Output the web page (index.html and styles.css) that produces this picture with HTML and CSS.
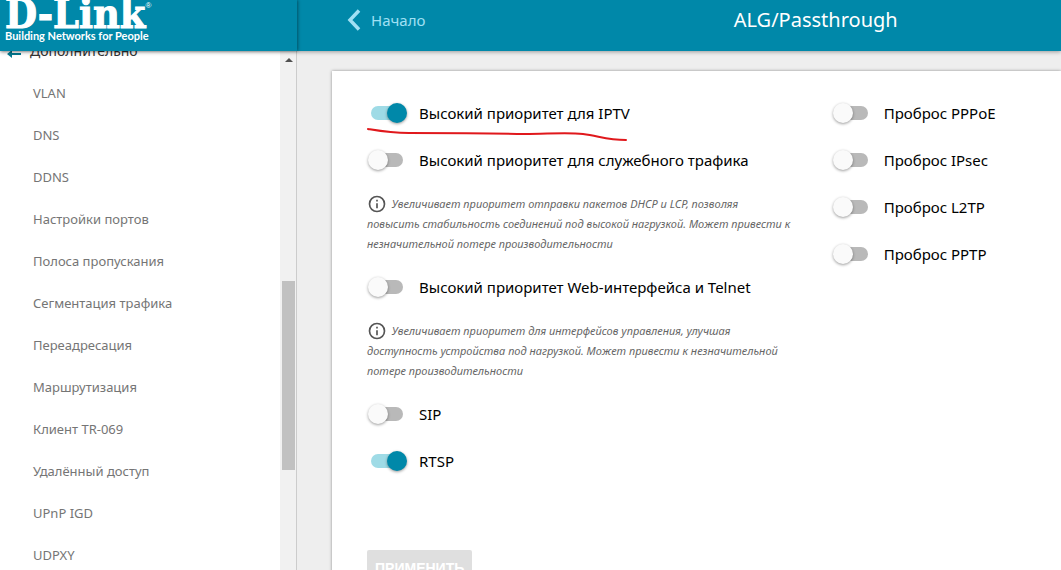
FILE: index.html
```html
<!DOCTYPE html>
<html lang="ru">
<head>
  <meta charset="UTF-8">
  <title>ALG/Passthrough</title>
  <link rel="stylesheet" href="styles.css">
</head>
<body>

  <header class="header">
    <a class="logo" href="#">
      <span class="logo-name">D-Link<sup>®</sup></span>
      <span class="logo-slogan">Building Networks for People</span>
    </a>
    <div class="header-main">
      <a class="back" href="#">
        <svg width="14" height="22" viewBox="0 0 14 22"><path d="M12 1.500L3 11l9 9.500" fill="none" stroke="currentColor" stroke-width="3.500"/></svg>
        Начало
      </a>
      <h1>ALG/Passthrough</h1>
    </div>
  </header>

  <div class="page">
    <aside class="sidebar">
      <nav class="menu">
        <a class="menu-title" href="#">
          <svg width="14" height="10" viewBox="0 0 14 10"><path d="M0 5l5-4v3h9v2H5v3z" fill="#00788f"/></svg>
          Дополнительно
        </a>
        <a href="#">VLAN</a>
        <a href="#">DNS</a>
        <a href="#">DDNS</a>
        <a href="#">Настройки портов</a>
        <a href="#">Полоса пропускания</a>
        <a href="#">Сегментация трафика</a>
        <a href="#">Переадресация</a>
        <a href="#">Маршрутизация</a>
        <a href="#">Клиент TR-069</a>
        <a href="#">Удалённый доступ</a>
        <a href="#">UPnP IGD</a>
        <a href="#">UDPXY</a>
      </nav>
      <div class="scrollbar">
        <div class="scroll-arrow"></div>
        <div class="scroll-thumb"></div>
      </div>
    </aside>

    <main class="content">
      <form class="card">
        <div class="columns">
          <div>
            <label class="option marked">
              <input type="checkbox" checked> Высокий приоритет для IPTV
              <svg class="underline" width="264" height="16" viewBox="0 0 264 16"><path d="M1 2C13 4 24 6 42 6C80 6 120 6 158 7C180 7 200 5 216 7C232 9 240 13 259 13" fill="none" stroke="#e0181c" stroke-width="2" stroke-linecap="round"/></svg>
            </label>
            <label class="option"><input type="checkbox"> Высокий приоритет для служебного трафика</label>
            <p class="hint">
              <svg width="20" height="20" viewBox="0 0 24 24"><circle cx="12" cy="12" r="9" fill="none" stroke="#555" stroke-width="2"/><path d="M11 7h2v2h-2zM11 11h2v6h-2z" fill="#555"/></svg>
              Увеличивает приоритет отправки пакетов DHCP и LCP, позволяя<br>
              повысить стабильность соединений под высокой нагрузкой. Может привести к<br>
              незначительной потере производительности
            </p>
            <label class="option"><input type="checkbox"> Высокий приоритет Web-интерфейса и Telnet</label>
            <p class="hint">
              <svg width="20" height="20" viewBox="0 0 24 24"><circle cx="12" cy="12" r="9" fill="none" stroke="#555" stroke-width="2"/><path d="M11 7h2v2h-2zM11 11h2v6h-2z" fill="#555"/></svg>
              Увеличивает приоритет для интерфейсов управления, улучшая<br>
              доступность устройства под нагрузкой. Может привести к незначительной<br>
              потере производительности
            </p>
            <label class="option"><input type="checkbox"> SIP</label>
            <label class="option"><input type="checkbox" checked> RTSP</label>
          </div>
          <div>
            <label class="option"><input type="checkbox"> Проброс PPPoE</label>
            <label class="option"><input type="checkbox"> Проброс IPsec</label>
            <label class="option"><input type="checkbox"> Проброс L2TP</label>
            <label class="option"><input type="checkbox"> Проброс PPTP</label>
          </div>
        </div>
        <button class="apply" type="button" disabled>ПРИМЕНИТЬ</button>
      </form>
    </main>
  </div>

</body>
</html>
```

FILE: styles.css
```css
* {
  box-sizing: border-box;
}

body {
  margin: 0;
  height: 100vh;
  display: flex;
  flex-direction: column;
  overflow: hidden;
  background: #eee;
  font-family: Tahoma, "Noto Sans", sans-serif;
}

a {
  color: inherit;
  text-decoration: none;
}

.header {
  display: flex;
  flex-shrink: 0;
  height: 51px;
  position: relative;
  z-index: 1;
  background: #0088a9;
  color: white;
  box-shadow: 0 1px 4px rgba(0,0,0,0.35);
}

.logo {
  display: flex;
  flex-direction: column;
  justify-content: flex-end;
  width: 297px;
  flex-shrink: 0;
  padding: 0 0 8px 5px;
  overflow: hidden;
  white-space: nowrap;
  box-shadow: 1px 0 3px rgba(0,0,0,0.4);
}

.logo-name {
  font-family: "DejaVu Serif Condensed", "DejaVu Serif", serif;
  font-weight: bold;
  font-size: 41px;
  line-height: 30px;
  -webkit-text-stroke: 1px white;
}

.logo-name sup {
  font-family: "Liberation Sans", sans-serif;
  font-weight: normal;
  font-size: 8px;
  line-height: 8px;
  vertical-align: 20px;
  -webkit-text-stroke: 0;
}

.logo-slogan {
  font-family: Lato, sans-serif;
  font-weight: bold;
  font-size: 11px;
  line-height: 14px;
}

.header-main {
  flex: 1;
  display: grid;
  grid-template-columns: 13fr 11fr;
  padding: 0 0 12px 50px;
  align-items: center;
}

.back {
  display: flex;
  align-items: center;
  gap: 10px;
  color: #a0e0f4;
  font-size: 15px;
}

h1 {
  margin: 0;
  font-size: 20px;
  line-height: 24px;
  font-weight: normal;
}

.page {
  flex: 1;
  min-height: 0;
  display: flex;
}

.sidebar {
  display: flex;
  width: 297px;
  flex-shrink: 0;
  overflow: hidden;
  background: white;
  border-right: 1px solid #ccc;
}

.menu {
  flex: 1;
  margin-top: -23px;
}

.menu a {
  display: flex;
  align-items: center;
  height: 42px;
  padding-left: 33px;
  font-size: 13px;
  color: #757575;
}

.menu .menu-title {
  height: 44px;
  gap: 9px;
  padding-left: 7px;
  font-size: 14px;
  color: #333;
}

.menu-title svg {
  margin-top: 8px;
}

.scrollbar {
  width: 16px;
  padding: 7px 1px 0 2px;
  background: #f1f1f1;
}

.scroll-arrow {
  width: 8px;
  margin: 0 auto;
  border: 4px solid transparent;
  border-top-width: 0;
  border-bottom-color: #505050;
}

.scroll-thumb {
  height: 189px;
  margin-top: 219px;
  background: #c1c1c1;
}

.content {
  flex: 1;
  padding: 20px 0 0 35px;
}

.card {
  min-height: 100%;
  padding: 18px 0 0 35px;
  background: white;
  box-shadow: 0 0 3px rgba(0,0,0,0.4);
}

.columns {
  display: grid;
  grid-template-columns: minmax(0, 2fr) minmax(0, 1fr);
  gap: 6px;
}

.option {
  display: flex;
  align-items: center;
  height: 47px;
  font-size: 15px;
  white-space: nowrap;
  color: black;
}

.option input {
  appearance: none;
  position: relative;
  width: 40px;
  height: 20px;
  margin: 0 12px 0 0;
  flex-shrink: 0;
}

.option input::before {
  content: "";
  position: absolute;
  left: 4px;
  top: 3px;
  width: 32px;
  height: 14px;
  border-radius: 7px;
  background: #b9b9b9;
}

.option input::after {
  content: "";
  position: absolute;
  left: 1px;
  top: 0;
  width: 20px;
  height: 20px;
  border-radius: 50%;
  background: #fafafa;
  box-shadow: 0 1px 3px rgba(0,0,0,0.4);
}

.option input:checked::before {
  background: #9fdbe6;
}

.option input:checked::after {
  left: 20px;
  background: #0088a9;
}

/* red pen mark below the first option */
.marked {
  position: relative;
}

.underline {
  position: absolute;
  left: 0;
  top: 38px;
  z-index: 1;
}

.hint {
  margin: 11px 0 9px;
  font-size: 11px;
  line-height: 20px;
  font-style: italic;
  white-space: nowrap;
  color: #666;
}

.hint svg {
  margin-right: 2px;
  vertical-align: top;
}

.apply {
  height: 36px;
  margin-top: 66px;
  padding: 0 8px;
  border: none;
  border-radius: 2px;
  background: #dfdfdf;
  color: white;
  font-family: "Liberation Sans", sans-serif;
  font-weight: bold;
  font-size: 14px;
}
```
